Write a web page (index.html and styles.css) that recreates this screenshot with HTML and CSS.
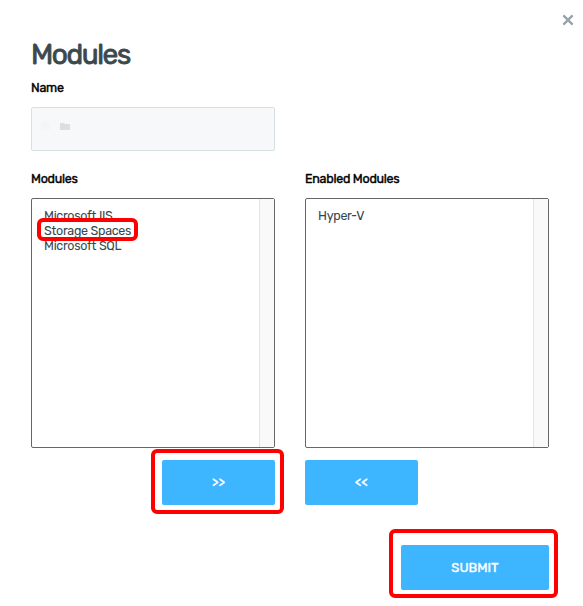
FILE: index.html
```html
<!DOCTYPE html>
<html lang="en">
<head>
<meta charset="utf-8">
<title>Modules</title>
<link rel="stylesheet" href="styles.css">
</head>
<body>
<main class="dialog">
  <button class="close" aria-label="Close">
    <svg width="12" height="12" viewBox="0 0 12 12"><path d="M1.4 1.4 10.6 10.6M10.6 1.4 1.4 10.6"/></svg>
  </button>
  <h1 class="title">Modules</h1>
  <div class="label name-label">Name</div>
  <div class="name-field">
    <span class="smudge"></span>
    <svg class="folder" width="10" height="7" viewBox="0 0 10 7"><path d="M0 0h4l1 1h5v6H0z"/></svg>
  </div>
  <div class="columns">
    <section class="column">
      <div class="label">Modules</div>
      <div class="list">
        <ul class="items">
          <li>Microsoft IIS</li>
          <li class="marked">Storage Spaces<i class="mark mark-item"></i></li>
          <li>Microsoft SQL</li>
        </ul>
        <div class="track"></div>
      </div>
      <button class="btn move add">&gt;&gt;<i class="mark mark-add"></i></button>
    </section>
    <section class="column">
      <div class="label">Enabled Modules</div>
      <div class="list">
        <ul class="items">
          <li>Hyper-V</li>
        </ul>
        <div class="track"></div>
      </div>
      <button class="btn move">&lt;&lt;</button>
    </section>
  </div>
  <button class="btn submit">SUBMIT<i class="mark mark-submit"></i></button>
</main>
</body>
</html>
```
FILE: styles.css
```css
* { box-sizing: border-box; }
body {
  margin: 0;
  background: #fff;
  color: #37474f;
  font-family: Rubik, Roboto, "Liberation Sans", sans-serif;
}
.dialog {
  display: flex;
  flex-direction: column;
  width: 583px;
  height: 606px;
  padding: 14px 34px 0 31px;
  overflow: hidden;
}
button { border: 0; padding: 0; font-family: inherit; }
.close {
  align-self: flex-end;
  width: 12px;
  height: 12px;
  margin-right: -25px;
  background: none;
}
.close svg { display: block; }
.close path { stroke: #95a3a9; stroke-width: 2.3; fill: none; }
.title {
  margin: 12px 0 0;
  height: 34px;
  font-size: 28px;
  line-height: 33px;
  font-weight: 400;
  letter-spacing: -1.4px;
  color: #3b484e;
  -webkit-text-stroke: 0.8px #3b484e;
}
.label {
  height: 16px;
  font-size: 12.5px;
  line-height: 16px;
  font-weight: 400;
  letter-spacing: -0.27px;
  color: #000;
  white-space: nowrap;
  -webkit-text-stroke: 0.4px #000;
}
.name-label { margin-top: 8px; }
.name-field {
  display: flex;
  width: 244px;
  height: 44px;
  margin-top: 11px;
  padding: 14px 9px;
  border: 1px solid #d7e0e4;
  border-radius: 2px;
  background: #f6f8fa;
}
.smudge { width: 9px; height: 8px; background: #f3f5f7; }
.folder { margin: 1px 0 0 10px; fill: #dcdfe1; }
.columns { display: flex; gap: 30px; margin-top: 20px; }
.column { display: flex; flex-direction: column; width: 244px; }
.list {
  display: flex;
  height: 250px;
  margin-top: 11px;
  border: 1px solid #666;
  border-radius: 2px;
}
.items {
  flex: 1;
  margin: 0;
  padding: 9px 12px;
  list-style: none;
  font-size: 12.5px;
  letter-spacing: -0.3px;
  line-height: 15px;
}
.items li { height: 15px; white-space: nowrap; }
.marked { position: relative; }
.track { width: 15px; border-left: 1px solid #e4e4e4; background: #f9f9f9; }
.btn {
  position: relative;
  width: 113px;
  height: 45px;
  margin-top: 12px;
  border-radius: 2px;
  background: #3eb5ff;
  color: #fff;
  font-size: 13px;
  font-weight: 400;
  -webkit-text-stroke: 0.4px #fff;
}
.move { padding-bottom: 2px; }
.add { align-self: flex-end; }
.submit {
  align-self: flex-end;
  width: 148px;
  margin-top: 40px;
}
.mark { position: absolute; border: 4px solid #f00; border-radius: 6px; }
.mark-item { left: -7px; top: -5px; width: 101px; height: 23px; }
.mark-add { left: -11px; top: -11px; width: 133px; height: 65px; }
.mark-submit { left: -12px; top: -16px; width: 169px; height: 69px; }
```
